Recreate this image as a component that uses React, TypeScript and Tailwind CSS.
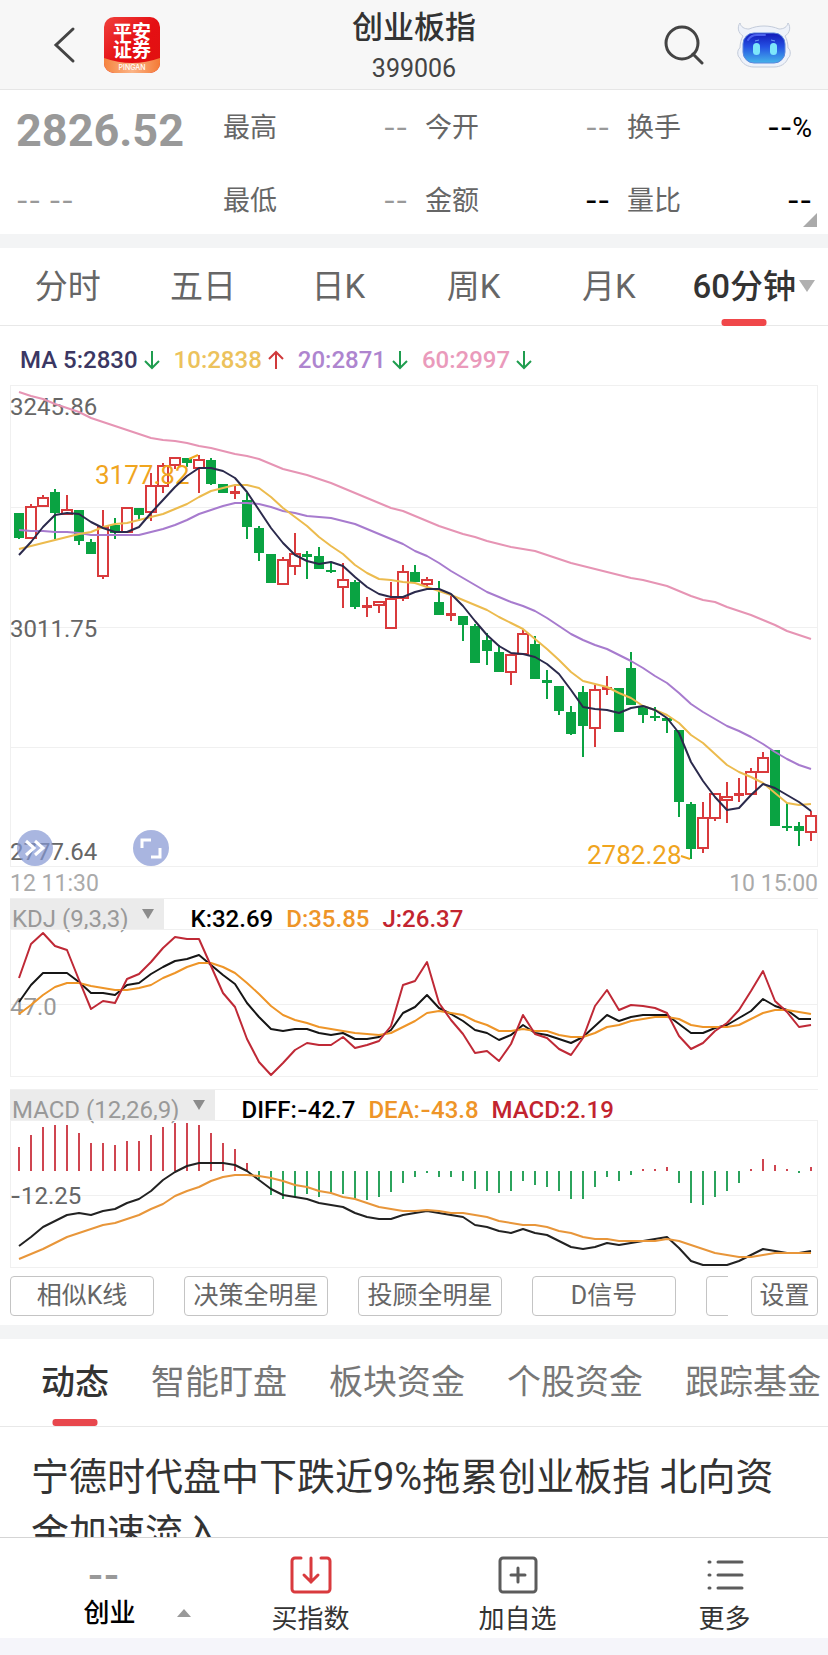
import { useState, type ReactNode } from 'react';
import clsx from 'clsx';

type Candle = ['up' | 'down', number, number, number, number];

const STEP = 12;
const FIRST_X = 9;
const CHART_WIDTH = 808;

const UP = '#d93a3c';
const DOWN = '#0aa342';

// direction, high, body top, body bottom, low
const candles: Candle[] = [
  ['down', 128, 128, 153, 154], ['up', 119, 121, 153, 153], ['up', 110, 112, 121, 121],
  ['down', 104, 107, 128, 154], ['up', 110, 124, 129, 129], ['down', 125, 125, 156, 160],
  ['down', 154, 157, 169, 169], ['up', 125, 141, 191, 194], ['down', 133, 140, 148, 154],
  ['up', 122, 122, 147, 147], ['down', 123, 123, 130, 136], ['up', 88, 100, 127, 136],
  ['up', 78, 80, 101, 108], ['up', 72, 72, 80, 84], ['down', 73, 73, 78, 82],
  ['up', 70, 74, 83, 108], ['down', 73, 75, 99, 100], ['down', 99, 99, 108, 108],
  ['up', 101, 106, 109, 114], ['down', 108, 115, 142, 154], ['down', 141, 143, 168, 176],
  ['down', 169, 169, 198, 198], ['up', 172, 174, 199, 199], ['up', 148, 168, 181, 190],
  ['down', 166, 169, 172, 194], ['down', 162, 171, 184, 184], ['down', 178, 185, 187, 188],
  ['up', 178, 194, 202, 223], ['down', 195, 197, 222, 224], ['up', 212, 220, 223, 232],
  ['up', 216, 216, 220, 228], ['up', 197, 213, 243, 243], ['up', 180, 186, 213, 216],
  ['down', 180, 187, 197, 197], ['up', 192, 194, 199, 202], ['down', 196, 217, 230, 230],
  ['up', 210, 228, 231, 236], ['down', 231, 231, 240, 256], ['down', 239, 241, 278, 278],
  ['down', 248, 255, 266, 280], ['down', 260, 267, 287, 287], ['up', 269, 269, 287, 300],
  ['up', 245, 248, 269, 269], ['down', 251, 259, 294, 294], ['down', 285, 295, 298, 314],
  ['down', 301, 301, 326, 330], ['down', 321, 327, 349, 350], ['down', 301, 307, 341, 372],
  ['up', 300, 304, 343, 362], ['up', 291, 302, 305, 310], ['down', 303, 303, 347, 347],
  ['down', 267, 283, 320, 320], ['down', 322, 322, 330, 338], ['down', 322, 331, 333, 336],
  ['down', 333, 333, 336, 348], ['down', 345, 345, 417, 432], ['down', 417, 419, 464, 474],
  ['up', 417, 432, 463, 468], ['up', 408, 408, 433, 436], ['up', 397, 411, 415, 438],
  ['up', 393, 408, 411, 417], ['up', 383, 386, 409, 409], ['up', 367, 372, 387, 387],
  ['down', 365, 365, 441, 441], ['down', 418, 441, 442, 446], ['down', 437, 441, 446, 461],
  ['up', 426, 430, 447, 456],
];

const ma5 = [
  170, 157, 142, 130, 128, 129, 137, 143, 147, 147, 142, 128, 115, 102, 91, 83, 83, 86, 93, 107, 125, 143,
  158, 170, 176, 179, 177, 181, 192, 202, 209, 212, 212, 207, 204, 204, 209, 221, 236, 250, 261, 268, 269, 272,
  279, 289, 305, 322, 324, 325, 328, 323, 321, 325, 333, 348, 377, 396, 412, 425, 423, 410, 399, 403, 410, 417, 426,
];
const ma10 = [
  164, 161, 158, 155, 152, 149, 147, 142, 139, 138, 135, 132, 129, 124, 119, 112, 106, 103, 100, 100, 103, 112,
  123, 132, 141, 152, 161, 169, 180, 188, 194, 195, 197, 198, 202, 206, 210, 215, 220, 225, 232, 238, 244, 254,
  264, 275, 287, 296, 299, 302, 308, 313, 321, 325, 330, 338, 350, 358, 369, 380, 387, 392, 398, 408, 418, 420, 419,
];
const ma20 = [
  145, 146, 146, 147, 147, 148, 150, 150, 150, 150, 150, 147, 144, 140, 135, 129, 125, 121, 118, 118, 119, 122,
  126, 128, 131, 132, 133, 136, 139, 144, 149, 154, 159, 166, 171, 178, 186, 193, 200, 207, 212, 217, 221, 226,
  233, 241, 249, 255, 260, 264, 270, 276, 283, 291, 298, 308, 319, 327, 334, 341, 346, 352, 359, 367, 374, 380, 384,
];
const ma60 = [
  7, 11, 14, 19, 23, 27, 33, 37, 41, 45, 49, 53, 55, 56, 58, 61, 63, 66, 69, 71, 74, 79,
  84, 87, 90, 94, 98, 103, 108, 113, 118, 123, 126, 131, 136, 141, 145, 149, 152, 156, 159, 162, 164, 166,
  170, 174, 178, 181, 184, 187, 190, 193, 195, 198, 201, 206, 211, 215, 217, 222, 226, 230, 235, 240, 246, 250, 254,
];

const kdjJ = [
  49, 15, 4, 17, 21, 51, 80, 72, 74, 50, 45, 33, 19, 8, 10, 10, 37, 64, 78, 110, 133, 146,
  134, 121, 114, 116, 116, 108, 119, 116, 112, 97, 56, 52, 33, 74, 91, 105, 124, 122, 132, 115, 86, 105,
  109, 120, 126, 109, 77, 61, 81, 76, 77, 79, 84, 107, 120, 114, 102, 94, 81, 62, 42, 72, 83, 98, 96,
];
const kdjK = [
  73, 56, 44, 44, 44, 53, 64, 64, 66, 56, 54, 45, 38, 32, 30, 26, 36, 46, 55, 74, 88, 100,
  102, 100, 100, 104, 106, 104, 110, 110, 108, 101, 84, 78, 66, 79, 85, 92, 101, 104, 111, 106, 96, 104,
  106, 110, 114, 108, 97, 86, 92, 88, 86, 86, 86, 95, 104, 104, 99, 96, 89, 82, 70, 77, 81, 90, 90,
];
const kdjD = [
  85, 76, 66, 58, 54, 54, 57, 59, 61, 61, 59, 56, 49, 44, 38, 34, 34, 38, 44, 54, 65, 77,
  86, 91, 94, 98, 100, 102, 104, 105, 106, 104, 98, 92, 84, 82, 84, 86, 92, 96, 102, 102, 100, 102,
  102, 106, 108, 108, 104, 98, 96, 92, 90, 88, 88, 90, 96, 98, 98, 98, 96, 90, 84, 81, 81, 83, 85,
];

// bar ends, the zero line is at 51
const macdBars = [
  27, 15, 7, 5, 5, 13, 23, 23, 25, 21, 21, 15, 7, 3, 3, 5, 13, 23, 29, 43, 59, 75,
  79, 77, 74, 77, 74, 74, 79, 80, 77, 72, 63, 57, 53, 57, 57, 61, 69, 71, 73, 71, 61, 65,
  67, 71, 79, 79, 67, 57, 61, 55, 49, 49, 47, 63, 83, 85, 77, 71, 63, 49, 39, 45, 49, 53, 47,
];
const diff = [
  126, 117, 107, 101, 95, 93, 95, 91, 89, 83, 79, 71, 60, 52, 46, 43, 43, 43, 45, 51, 60, 69,
  75, 77, 79, 83, 85, 87, 93, 97, 99, 99, 95, 93, 91, 93, 95, 97, 105, 107, 111, 113, 109, 113,
  115, 121, 127, 129, 127, 123, 125, 123, 121, 119, 117, 128, 141, 145, 145, 145, 141, 135, 129, 131, 133, 133, 131,
];
const dea = [
  139, 134, 129, 123, 117, 113, 109, 105, 103, 99, 95, 89, 84, 76, 71, 67, 61, 57, 55, 55, 56, 58,
  61, 65, 67, 71, 73, 77, 79, 83, 87, 89, 91, 91, 90, 91, 93, 93, 95, 97, 101, 103, 105, 105,
  107, 111, 113, 117, 119, 119, 121, 121, 121, 121, 119, 121, 125, 129, 133, 135, 137, 137, 135, 133, 133, 133, 133,
];

const periods = ['分时', '五日', '日K', '周K', '月K', '60分钟'];
const feeds = ['动态', '智能盯盘', '板块资金', '个股资金', '跟踪基金'];
const tools = ['相似K线', '决策全明星', '投顾全明星', 'D信号'];

const averages = [
  { label: 'MA 5:2830', rising: false, className: 'text-[#3b3763]' },
  { label: '10:2838', rising: true, className: 'text-[#ecc25c]' },
  { label: '20:2871', rising: false, className: 'text-[#ae85cf]' },
  { label: '60:2997', rising: false, className: 'text-[#ea9abb]' },
];

const xAt = (i: number) => FIRST_X + i * STEP;

function Line({ values, color }: { values: number[]; color: string }) {
  return (
    <polyline
      points={values.map((y, i) => `${xAt(i)},${y}`).join(' ')}
      fill="none"
      stroke={color}
      strokeWidth="2"
      strokeLinejoin="round"
    />
  );
}

function ChartSvg({ height, grid, children }: { height: number; grid: number[]; children: ReactNode }) {
  return (
    <svg viewBox={`0 0 ${CHART_WIDTH} ${height}`} className="block h-auto w-full" aria-hidden="true">
      <rect x="0.5" y="0.5" width={CHART_WIDTH - 1} height={height - 1} fill="none" stroke="#f0f0f0" />
      {grid.map((y) => (
        <line key={y} x1="0" x2={CHART_WIDTH} y1={y + 0.5} y2={y + 0.5} stroke="#f0f0f0" />
      ))}
      {children}
    </svg>
  );
}

function CandleMark({ candle, index }: { candle: Candle; index: number }) {
  const [dir, high, top, bottom, low] = candle;
  const x = xAt(index);
  const height = Math.max(bottom - top, 2);
  const hollow = dir === 'up' && height > 3;
  const color = dir === 'up' ? UP : DOWN;

  return (
    <g stroke={color} strokeWidth="2">
      {high < top && <line x1={x} x2={x} y1={high} y2={top} />}
      {low > bottom && <line x1={x} x2={x} y1={bottom} y2={low} />}
      {hollow ? (
        <rect x={x - 5} y={top + 1} width="10" height={Math.max(height - 1, 2)} fill="none" />
      ) : (
        <rect x={x - 5} y={top} width="10" height={height} fill={color} stroke="none" />
      )}
    </g>
  );
}

function TrendArrow({ rising }: { rising: boolean }) {
  return (
    <svg viewBox="0 0 16 20" className="h-5 w-4" fill="none" stroke={rising ? '#d0393b' : '#1f9d4f'} strokeWidth="2">
      {rising ? <path d="M8 19V2M1 9l7-7 7 7" /> : <path d="M8 1v17M1 11l7 7 7-7" />}
    </svg>
  );
}

function Dashes({ className }: { className?: string }) {
  return <span className={clsx("font-['Inter']", className)}>--</span>;
}

function Minus() {
  return <span className="font-['Inter']">-</span>;
}

function Quote({ label, children }: { label: string; children: ReactNode }) {
  return (
    <div className="flex h-9 items-center justify-between">
      <dt className="text-[#666]">{label}</dt>
      <dd>{children}</dd>
    </div>
  );
}

function Header() {
  return (
    <header className="grid shrink-0 grid-cols-[1fr_auto_1fr] items-center border-b border-[#e6e6e6] bg-[#f7f7f7]">
      <div className="flex items-center gap-[25px] pl-[51px]">
        <button type="button" aria-label="返回" className="w-7">
          <svg viewBox="0 0 28 40" className="h-10 w-7" fill="none" stroke="#444" strokeWidth="3" strokeLinecap="round">
            <path d="M22 4 5 20l17 16" />
          </svg>
        </button>
        <svg viewBox="0 0 56 56" className="size-14" role="img" aria-label="平安证券">
          <defs>
            <clipPath id="logo-clip">
              <rect width="56" height="56" rx="10" />
            </clipPath>
            <linearGradient id="logo-red" x1="0" y1="0" x2="1" y2="1">
              <stop offset="0" stopColor="#f0413c" />
              <stop offset="0.5" stopColor="#e50f14" />
              <stop offset="1" stopColor="#e0120f" />
            </linearGradient>
            <linearGradient id="logo-orange" x1="0" y1="0" x2="1" y2="0">
              <stop offset="0" stopColor="#f5843f" />
              <stop offset="0.5" stopColor="#fbb487" />
              <stop offset="1" stopColor="#f47a35" />
            </linearGradient>
          </defs>
          <g clipPath="url(#logo-clip)">
            <rect width="56" height="56" fill="url(#logo-red)" />
            <path d="M0 41q28 10 56 0v15H0z" fill="url(#logo-orange)" />
          </g>
          <g fill="#fff" textAnchor="middle" className="font-['Noto_Sans_CJK_SC',sans-serif] font-bold">
            <text x="28" y="22" fontSize="19">平安</text>
            <text x="28" y="40" fontSize="19">证券</text>
          </g>
          <text x="28" y="53" fontSize="7" fill="#fff" textAnchor="middle" className="font-['Inter'] font-medium">
            PINGAN
          </text>
        </svg>
      </div>

      <div className="pt-1.5 pb-px text-center">
        <h1 className="text-[31px] leading-[44px] font-medium text-[#333]">创业板指</h1>
        <p className="text-[25px] leading-[38px] text-[#444]">399006</p>
      </div>

      <div className="flex items-center justify-end gap-[32px] pr-[36px]">
        <button type="button" aria-label="搜索">
          <svg viewBox="0 0 40 40" className="size-10" fill="none" stroke="#444" strokeWidth="3">
            <circle cx="18" cy="18" r="16" />
            <path d="m29 29 9 9" strokeLinecap="round" />
          </svg>
        </button>
        <button type="button" aria-label="智能助手">
          <svg viewBox="0 0 56 48" className="h-12 w-14">
            <defs>
              <linearGradient id="bot-face" x1="0" y1="0" x2="0" y2="1">
                <stop offset="0" stopColor="#1218b8" />
                <stop offset="0.45" stopColor="#2450e2" />
                <stop offset="1" stopColor="#45b4ea" />
              </linearGradient>
            </defs>
            <path
              d="M7 15C2 12 1 6 4 2c1 4 4 6 9 6 9-4 21-4 30 0 5 0 8-2 9-6 3 4 2 10-3 13 2 3 3 8 3 12 3 1 3 9 0 10-2 6-8 9-14 9H18c-6 0-12-3-14-9-3-1-3-9 0-10 0-4 1-9 3-12z"
              fill="#eef2fa"
              stroke="#c3cbda"
            />
            <rect x="7" y="12" width="42" height="30" rx="11" fill="url(#bot-face)" stroke="#5b86dc" />
            <path d="M12 19q3-5 9-5h8" fill="none" stroke="#4b62ee" strokeWidth="2" strokeLinecap="round" />
            <rect x="17" y="22" width="7" height="12" rx="3.5" fill="#7de6fb" />
            <rect x="34" y="22" width="7" height="12" rx="3.5" fill="#7de6fb" />
            <path d="m19 20 4-1M35 19l4 1" stroke="#6d9cf5" />
          </svg>
        </button>
      </div>
    </header>
  );
}

function Summary() {
  return (
    <section className="relative shrink-0 px-4 pt-5 pb-[15px] text-[27px]">
      <dl className="grid grid-cols-[190px_1fr_1fr_1fr] gap-x-[17px] gap-y-[37px]">
        <div className="flex h-9 items-center pt-1.5 text-[45px] font-bold text-[#999]">2826.52</div>
        <Quote label="最高"><Dashes className="text-[#999]" /></Quote>
        <Quote label="今开"><Dashes className="text-[#999]" /></Quote>
        <Quote label="换手">
          <Dashes className="font-medium text-black" />
          <span className="text-black">%</span>
        </Quote>
        <div className="flex h-9 items-center gap-2 text-[#999]">
          <Dashes />
          <Dashes />
        </div>
        <Quote label="最低"><Dashes className="text-[#999]" /></Quote>
        <Quote label="金额"><Dashes className="font-medium text-black" /></Quote>
        <Quote label="量比"><Dashes className="font-medium text-black" /></Quote>
      </dl>
      <svg viewBox="0 0 14 14" className="absolute right-[11px] bottom-[7px] size-3.5" fill="#aaa">
        <path d="M14 0v14H0z" />
      </svg>
    </section>
  );
}

function PeriodTabs() {
  const [active, setActive] = useState('60分钟');

  return (
    <nav className="flex shrink-0 border-b border-[#e8e8e8] pr-4">
      {periods.map((p) => (
        <button
          key={p}
          type="button"
          onClick={() => setActive(p)}
          className={clsx(
            'relative h-[77px] flex-1 text-[33px] whitespace-nowrap',
            p === active ? 'font-medium text-[#333]' : 'text-[#666]',
          )}
        >
          {p}
          {p === '60分钟' && (
            <svg viewBox="0 0 16 12" className="absolute top-8 -right-[3px] h-3 w-4" fill="#b0b0b0">
              <path d="M0 0h16L8 12z" />
            </svg>
          )}
          {p === active && (
            <span className="absolute -bottom-px left-1/2 h-[7px] w-[45px] -translate-x-1/2 rounded-[3px] bg-[#f0474a]" />
          )}
        </button>
      ))}
    </nav>
  );
}

function PriceChart() {
  return (
    <div className="relative">
      <ChartSvg height={482} grid={[122, 242, 362]}>
        {candles.map((c, i) => (
          <CandleMark key={i} candle={c} index={i} />
        ))}
        <g fontSize="26" fill="#f0a51e">
          <text x="85" y="99">3177.82</text>
          <text x="577" y="479">2782.28</text>
        </g>
        <path d="M179 74l9-4M671 471l9 3" stroke="#f0a51e" strokeWidth="2" />
        <g fontSize="24" fill="#666">
          <text x="0" y="30">3245.86</text>
          <text x="0" y="252">3011.75</text>
          <text x="0" y="475">2777.64</text>
        </g>
        <Line values={ma60} color="#e694b4" />
        <Line values={ma20} color="#a77bce" />
        <Line values={ma10} color="#ecbb4e" />
        <Line values={ma5} color="#2b2a4c" />
      </ChartSvg>
      <button type="button" aria-label="展开" className="absolute bottom-px left-[7px] size-9 rounded-full bg-[#8597d3]/70">
        <svg viewBox="0 0 36 36" className="size-9" fill="none" stroke="#fff" strokeWidth="3">
          <path d="m9 11 8 7-8 7M18 11l8 7-8 7" />
        </svg>
      </button>
      <button type="button" aria-label="全屏" className="absolute bottom-px left-[123px] size-9 rounded-full bg-[#a9b5e0]">
        <svg viewBox="0 0 36 36" className="size-9" fill="none" stroke="#fff" strokeWidth="3">
          <path d="M9 18V10h9M27 18v9h-9" />
        </svg>
      </button>
    </div>
  );
}

function IndicatorHeader({ name, children }: { name: string; children: ReactNode }) {
  return (
    <div className="flex h-[31px] border-t border-[#f0f0f0] text-[24px] leading-[40px] font-medium whitespace-nowrap">
      <button type="button" className="flex gap-3.5 bg-[#ebebeb] pr-2.5 pl-0.5 font-normal text-[#999]">
        {name}
        <svg viewBox="0 0 12 10" className="mt-2.5 h-2.5 w-3" fill="#8c8c8c">
          <path d="M0 0h12L6 10z" />
        </svg>
      </button>
      <div className="flex gap-[13px] pl-[26px]">{children}</div>
    </div>
  );
}

function Indicators() {
  return (
    <>
      <IndicatorHeader name="KDJ (9,3,3)">
        <span className="text-black">K:32.69</span>
        <span className="text-[#ee9528]">D:35.85</span>
        <span className="text-[#c2242f]">J:26.37</span>
      </IndicatorHeader>
      <ChartSvg height={148} grid={[75]}>
        <text x="0" y="86" fontSize="24" fill="#999">47.0</text>
        <Line values={kdjK} color="#161616" />
        <Line values={kdjD} color="#ee9528" />
        <Line values={kdjJ} color="#bf2936" />
      </ChartSvg>

      <div className="h-3" />

      <IndicatorHeader name="MACD (12,26,9)">
        <span className="text-black">DIFF:<Minus />42.7</span>
        <span className="text-[#ee9528]">DEA:<Minus />43.8</span>
        <span className="text-[#c2242f]">MACD:2.19</span>
      </IndicatorHeader>
      <ChartSvg height={148} grid={[75]}>
        <text x="0" y="84" fontSize="24" fill="#666">
          <tspan className="font-['Inter']">-</tspan>12.25
        </text>
        {macdBars.map((y, i) => (
          <line key={i} x1={xAt(i)} x2={xAt(i)} y1="51" y2={y} stroke={y < 51 ? '#cf4550' : '#2ba35c'} strokeWidth="2" />
        ))}
        <Line values={diff} color="#222" />
        <Line values={dea} color="#e8963a" />
      </ChartSvg>
    </>
  );
}

function ToolRow() {
  return (
    <div className="flex gap-[23px] pt-2 pb-[9px] text-[25px] text-[#666]">
      <div className="flex min-w-0 flex-1 gap-[30px] overflow-hidden">
        {tools.map((t) => (
          <button key={t} type="button" className="h-10 w-36 shrink-0 rounded-[4px] border border-[#c4c4c4] leading-[38px]">
            {t}
          </button>
        ))}
        <button type="button" aria-label="更多指标" className="h-10 w-36 shrink-0 rounded-[4px] border border-[#c4c4c4]" />
      </div>
      <button type="button" className="h-10 w-[67px] shrink-0 rounded-[4px] border border-[#c4c4c4] leading-[38px]">
        设置
      </button>
    </div>
  );
}

function Feed() {
  const [active, setActive] = useState('动态');

  return (
    <section className="min-h-0 flex-1 overflow-hidden">
      <nav className="flex gap-[42px] overflow-hidden border-b border-[#e8e8e8] pl-[41px]">
        {feeds.map((f) => (
          <button
            key={f}
            type="button"
            onClick={() => setActive(f)}
            className={clsx(
              'relative h-[87px] shrink-0 text-[34px]',
              f === active ? 'font-medium text-[#333]' : 'text-[#777]',
            )}
          >
            {f}
            {f === active && (
              <span className="absolute bottom-0 left-1/2 h-[7px] w-[45px] -translate-x-1/2 rounded-[3px] bg-[#e8474d]" />
            )}
          </button>
        ))}
      </nav>
      <a href="#news" className="block px-[31px] pt-[22px] text-[38px] leading-[56px] text-[#333]">
        宁德时代盘中下跌近9%拖累创业板指 北向资金加速流入
      </a>
    </section>
  );
}

function BottomBar() {
  return (
    <footer className="shrink-0 bg-[#f5f5fa] pb-[17px]">
      <nav className="grid h-[101px] grid-cols-4 border-t border-[#d5d5d5] bg-white text-[26px] text-[#333]">
        <button type="button" className="relative flex flex-col items-center pt-[18px] leading-[38px]">
          <Dashes className="text-[34px] font-bold text-[#999]" />
          <span className="pl-3 font-medium text-black">创业</span>
          <svg viewBox="0 0 14 8" className="absolute right-4 bottom-[21px] h-2 w-3.5" fill="#999">
            <path d="M7 0l7 8H0z" />
          </svg>
        </button>
        <button type="button" className="flex flex-col items-center gap-1.5 pt-[18px] leading-[38px]">
          <svg viewBox="0 0 42 38" className="h-[38px] w-[42px]" fill="none" stroke="#d93a3e" strokeWidth="3" strokeLinecap="round">
            <path d="M11 2H5a3 3 0 0 0-3 3v28a3 3 0 0 0 3 3h32a3 3 0 0 0 3-3V5a3 3 0 0 0-3-3h-6" />
            <path d="M21 2v24M14 19l7 7 7-7" />
          </svg>
          买指数
        </button>
        <button type="button" className="flex flex-col items-center gap-1.5 pt-[18px] leading-[38px]">
          <svg viewBox="0 0 40 38" className="h-[38px] w-10" fill="none" stroke="#5c5c5c" strokeWidth="3" strokeLinecap="round">
            <rect x="2" y="2" width="36" height="34" rx="3" />
            <path d="M20 12v14M13 19h14" />
          </svg>
          加自选
        </button>
        <button type="button" className="flex flex-col items-center gap-1.5 pt-[18px] leading-[38px]">
          <svg viewBox="0 0 38 38" className="size-[38px]" fill="none" stroke="#5c5c5c" strokeWidth="3" strokeLinecap="round">
            <path d="M3 6h1M12 6h24M3 19h1M12 19h24M3 32h1M12 32h24" />
          </svg>
          更多
        </button>
      </nav>
    </footer>
  );
}

export default function App() {
  return (
    <div className="flex h-screen flex-col overflow-hidden bg-white font-['Roboto','Noto_Sans_CJK_SC',sans-serif]">
      <Header />
      <Summary />
      <div className="h-3.5 shrink-0 bg-[#f3f4f5]" />
      <PeriodTabs />

      <section className="shrink-0 px-2.5">
        <div className="flex h-[59px] items-center gap-3.5 pt-2 pl-2.5 text-[24px] font-medium">
          {averages.map((a) => (
            <span key={a.label} className={clsx('flex items-center gap-1.5', a.className)}>
              {a.label}
              <TrendArrow rising={a.rising} />
            </span>
          ))}
        </div>
        <PriceChart />
        <div className="flex h-[31px] items-center justify-between pt-1 text-[23px] text-[#aaa]">
          <span>12 11:30</span>
          <span>10 15:00</span>
        </div>
        <Indicators />
        <ToolRow />
      </section>

      <div className="h-3.5 shrink-0 bg-[#f3f4f5]" />
      <Feed />
      <BottomBar />
    </div>
  );
}
